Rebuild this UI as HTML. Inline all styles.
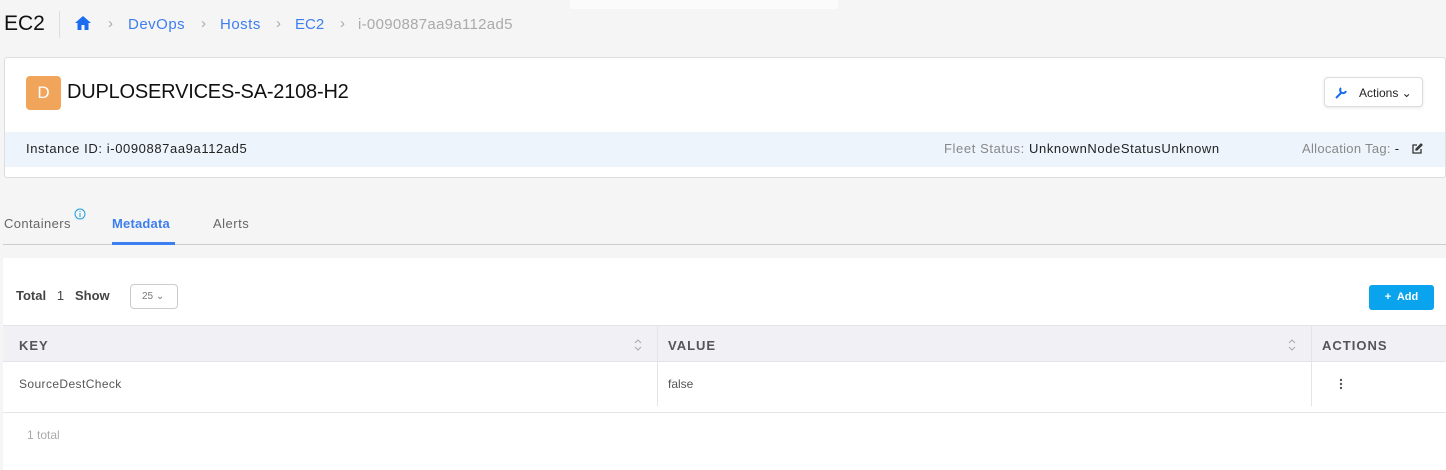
<!DOCTYPE html>
<html><head><style>
*{box-sizing:border-box;margin:0;padding:0}
body{width:1446px;height:470px;overflow:hidden;background:#f5f5f5;font-family:"Liberation Sans",sans-serif;position:relative;color:#222}
.a{position:absolute;white-space:nowrap}
.s{letter-spacing:0.5px}
</style></head><body>
<div class="a" style="left:570px;top:0;width:268px;height:9px;background:#fbfbfb"></div>
<div class="a" style="left:4px;top:12px;font-size:21px;color:#111">EC2</div>
<div class="a" style="left:59px;top:11px;width:1px;height:27px;background:#ddd"></div>
<svg class="a" style="left:74px;top:15px" width="18" height="16" viewBox="0 0 18 16"><path d="M9 1L1 8h2.5v7h4v-5h3v5h4V8H17z" fill="#1a6bf0"/></svg>
<div class="a" style="left:108px;top:15px;font-size:15px;color:#aaa">›</div>
<div class="a s" style="left:128px;top:16px;font-size:15px;color:#3d7ef0">DevOps</div>
<div class="a" style="left:201px;top:15px;font-size:15px;color:#aaa">›</div>
<div class="a s" style="left:220px;top:16px;font-size:15px;color:#3d7ef0">Hosts</div>
<div class="a" style="left:276px;top:15px;font-size:15px;color:#aaa">›</div>
<div class="a" style="left:295px;top:16px;font-size:15px;color:#3d7ef0">EC2</div>
<div class="a" style="left:340px;top:15px;font-size:15px;color:#aaa">›</div>
<div class="a" style="left:358px;top:16px;font-size:15px;color:#aaa;letter-spacing:0.3px">i-0090887aa9a112ad5</div>

<div class="a" style="left:4px;top:57px;width:1442px;height:121px;background:#fff;border:1px solid #ddd;border-radius:3px"></div>
<div class="a" style="left:26px;top:76px;width:35px;height:34px;background:#f0a55a;border-radius:4px;color:#fff;font-size:17px;text-align:center;line-height:34px">D</div>
<div class="a" style="left:67px;top:81px;font-size:20px;color:#111;letter-spacing:-0.2px">DUPLOSERVICES-SA-2108-H2</div>
<div class="a" style="left:1324px;top:77px;width:99px;height:30px;border:1px solid #ddd;border-radius:4px;background:#fff;box-shadow:0 1px 3px rgba(0,0,0,.1)"></div>
<svg class="a" style="left:1334px;top:84px" width="16" height="16" viewBox="0 0 16 16"><path d="M2 14l6-6M7 4a3 3 0 1 0 5 3" stroke="#1a6bf0" stroke-width="2" fill="none"/></svg>
<div class="a" style="left:1359px;top:86px;font-size:12px;color:#222">Actions ⌄</div>
<div class="a" style="left:5px;top:132px;width:1440px;height:35px;background:#edf4fc"></div>
<div class="a" style="left:26px;top:141px;font-size:13px;color:#222;letter-spacing:0.6px">Instance ID: i-0090887aa9a112ad5</div>
<div class="a" style="left:944px;top:141px;font-size:13px;color:#888;letter-spacing:0.6px">Fleet Status: <span style="color:#222">UnknownNodeStatusUnknown</span></div>
<div class="a" style="left:1302px;top:141px;font-size:13px;color:#888;letter-spacing:0.3px">Allocation Tag: <span style="color:#222">-</span></div>
<svg class="a" style="left:1411px;top:143px" width="12" height="12" viewBox="0 0 12 12"><path d="M6 2H2v8h8V6M5 7l1 0 5-5-1-1-5 5z" stroke="#333" stroke-width="1.3" fill="none"/></svg>

<div class="a" style="left:4px;top:216px;font-size:13px;color:#666;letter-spacing:0.4px">Containers</div>
<svg class="a" style="left:74px;top:208px" width="12" height="12"><circle cx="6" cy="6" r="5" stroke="#1aa0e0" fill="none"/><path d="M6 5v4M6 3v1" stroke="#1aa0e0"/></svg>
<div class="a" style="left:112px;top:216px;font-size:13px;color:#3d7ef0;font-weight:bold;letter-spacing:0.2px">Metadata</div>
<div class="a" style="left:213px;top:216px;font-size:13px;color:#666;letter-spacing:0.5px">Alerts</div>
<div class="a" style="left:3px;top:244px;width:1443px;height:1px;background:#ccc"></div>
<div class="a" style="left:112px;top:242px;width:63px;height:3px;background:#3d7ef0"></div>

<div class="a" style="left:3px;top:258px;width:1443px;height:212px;background:#fff"></div>
<div class="a" style="left:16px;top:288px;font-size:13px;color:#444"><b>Total</b>&nbsp;&nbsp;&nbsp;1&nbsp;&nbsp;&nbsp;<b>Show</b></div>
<div class="a" style="left:130px;top:284px;width:48px;height:25px;border:1px solid #ccc;border-radius:4px;font-size:10px;color:#777;padding:6px 0 0 11px">25 ⌄</div>
<div class="a" style="left:1369px;top:285px;width:65px;height:25px;background:#0aa3ee;border-radius:3px;color:#fff;font-size:11px;font-weight:bold;text-align:center;line-height:25px">+&nbsp; Add</div>
<div class="a" style="left:3px;top:325px;width:1443px;height:37px;background:#f1f1f5;border-top:1px solid #e4e4e8;border-bottom:1px solid #e4e4e8"></div>
<div class="a" style="left:657px;top:325px;width:1px;height:81px;background:#e4e4e8"></div>
<div class="a" style="left:1311px;top:325px;width:1px;height:81px;background:#e4e4e8"></div>
<div class="a" style="left:19px;top:338px;font-size:13px;color:#555;letter-spacing:1px;font-weight:bold">KEY</div>
<div class="a" style="left:668px;top:338px;font-size:13px;color:#555;letter-spacing:1px;font-weight:bold">VALUE</div>
<div class="a" style="left:1322px;top:338px;font-size:13px;color:#555;letter-spacing:1px;font-weight:bold">ACTIONS</div>
<svg class="a" style="left:634px;top:338px" width="8" height="14"><path d="M1 5l3-3 3 3M1 9l3 3 3-3" stroke="#aaa" fill="none"/></svg>
<svg class="a" style="left:1288px;top:338px" width="8" height="14"><path d="M1 5l3-3 3 3M1 9l3 3 3-3" stroke="#aaa" fill="none"/></svg>
<div class="a" style="left:19px;top:377px;font-size:12px;color:#555;letter-spacing:0.4px">SourceDestCheck</div>
<div class="a" style="left:668px;top:377px;font-size:12px;color:#555">false</div>
<svg class="a" style="left:1339px;top:378px" width="4" height="12"><circle cx="2" cy="2" r="1.2" fill="#555"/><circle cx="2" cy="6" r="1.2" fill="#555"/><circle cx="2" cy="10" r="1.2" fill="#555"/></svg>
<div class="a" style="left:3px;top:412px;width:1443px;height:1px;background:#e4e4e8"></div>
<div class="a" style="left:27px;top:428px;font-size:12px;color:#aaa">1 total</div>
</body></html>
